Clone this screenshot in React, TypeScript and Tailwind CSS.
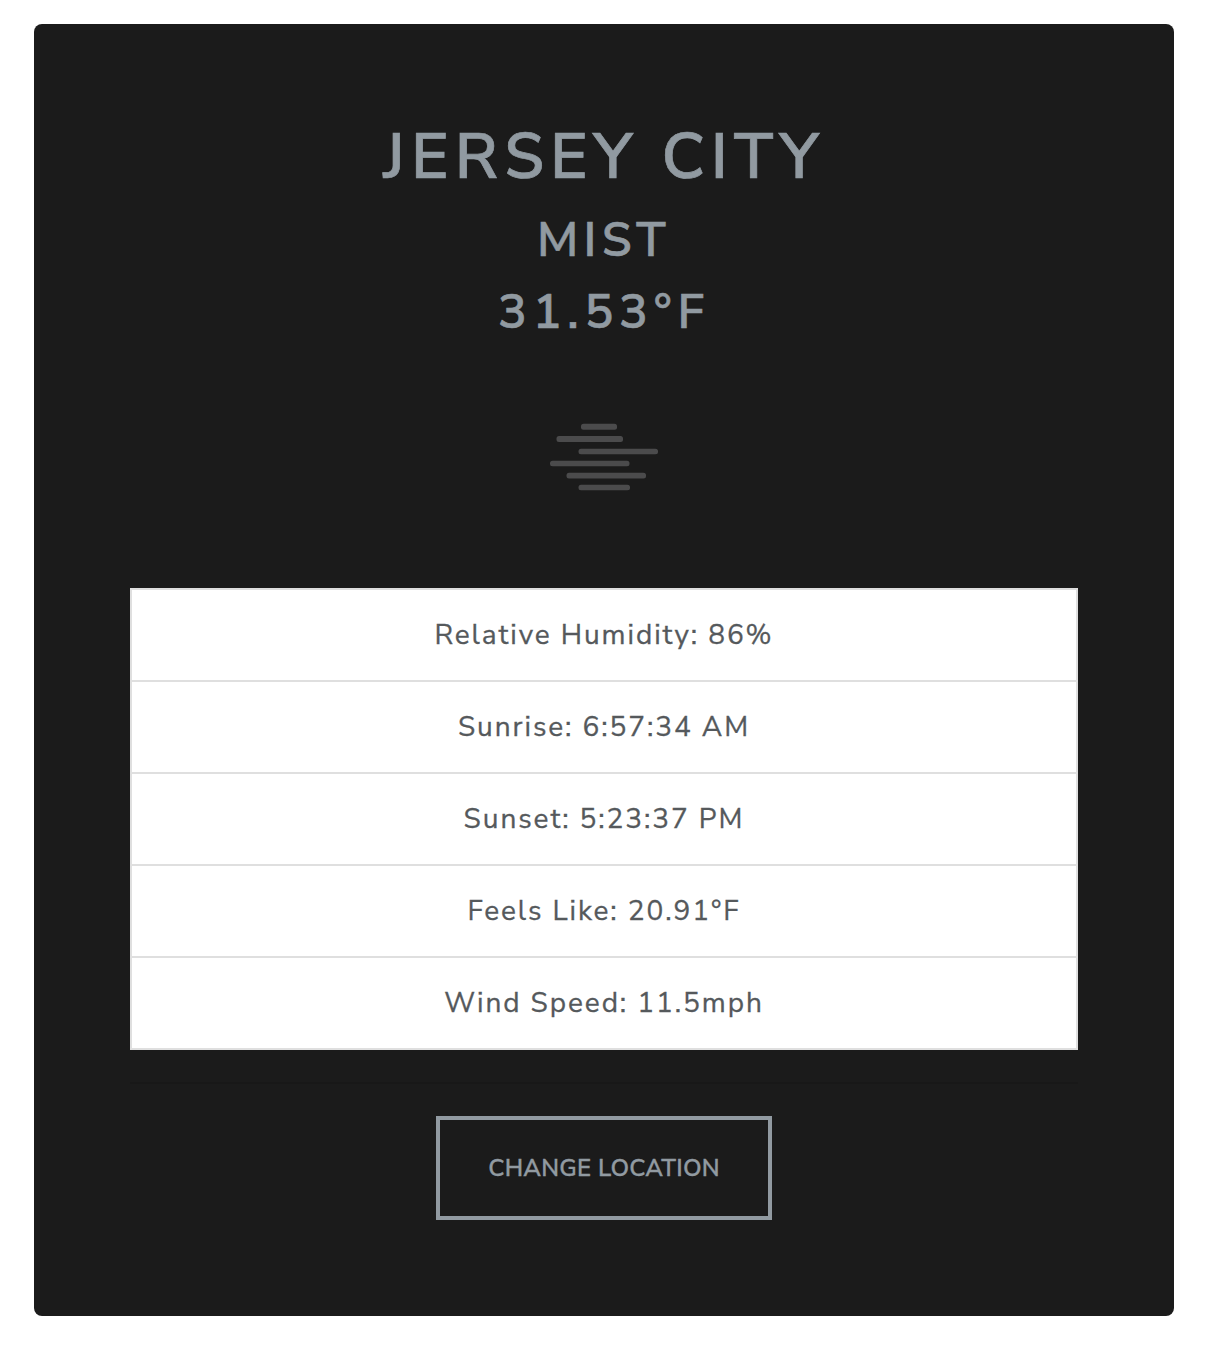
const readings = [
  'Relative Humidity: 86%',
  'Sunrise: 6:57:34 AM',
  'Sunset: 5:23:37 PM',
  'Feels Like: 20.91°F',
  'Wind Speed: 11.5mph',
];

function MistIcon() {
  return (
    <svg width="110" height="68" viewBox="0 0 110 68" fill="#4b4b4c" className="mx-auto block blur-[0.6px]">
      <rect x="32" y="0.8" width="36" height="6" rx="2.5" />
      <rect x="7.5" y="13" width="66.5" height="6" rx="2.5" />
      <rect x="29.5" y="25.8" width="79.5" height="5.4" rx="2.5" />
      <rect x="1" y="37.8" width="79.5" height="5.4" rx="2.5" />
      <rect x="17.5" y="49.8" width="79.5" height="5.6" rx="2.5" />
      <rect x="29.5" y="61.8" width="51.5" height="5.4" rx="2.5" />
    </svg>
  );
}

export default function App() {
  return (
    <div className="h-[1353px] bg-white pt-6 pl-[34px] font-['Nunito_Sans','Nunito','Open_Sans',sans-serif]">
      <main className="flex h-[1292px] w-[1140px] flex-col items-center rounded-lg bg-[#1b1b1b] px-24 pt-24 text-[#919aa1]">
        <h1 className="h-[72px] text-[64px] leading-[74px] font-semibold tracking-[6.1px] [-webkit-text-stroke:0.7px]">JERSEY CITY</h1>
        <h2 className="h-[72px] text-[48px] leading-[96px] font-semibold tracking-[5.4px] [-webkit-text-stroke:0.6px]">MIST</h2>
        <h2 className="h-[72px] text-[48px] leading-[96px] font-semibold tracking-[5.8px] [-webkit-text-stroke:0.6px]">31.53°F</h2>
        <div className="mt-[87px] h-[68px]"><MistIcon /></div>
        <ul className="mt-[97px] w-full border-2 border-b-0 border-[#dfdfdf] bg-white text-center text-[28px] font-normal tracking-[1.92px] text-[#55595c] [-webkit-text-stroke:0.3px]">
          {readings.map((reading) => (
            <li key={reading} className="h-[92px] border-b-2 border-[#dfdfdf] leading-[90px]">{reading}</li>
          ))}
        </ul>
        <hr className="mt-8 w-full border-t-2 border-[#181818]" />
        <button className="mt-8 h-[104px] w-[336px] border-4 border-[#919aa1] pb-px text-[24px] font-semibold tracking-[0.22px] [-webkit-text-stroke:0.3px]">CHANGE LOCATION</button>
      </main>
    </div>
  );
}
